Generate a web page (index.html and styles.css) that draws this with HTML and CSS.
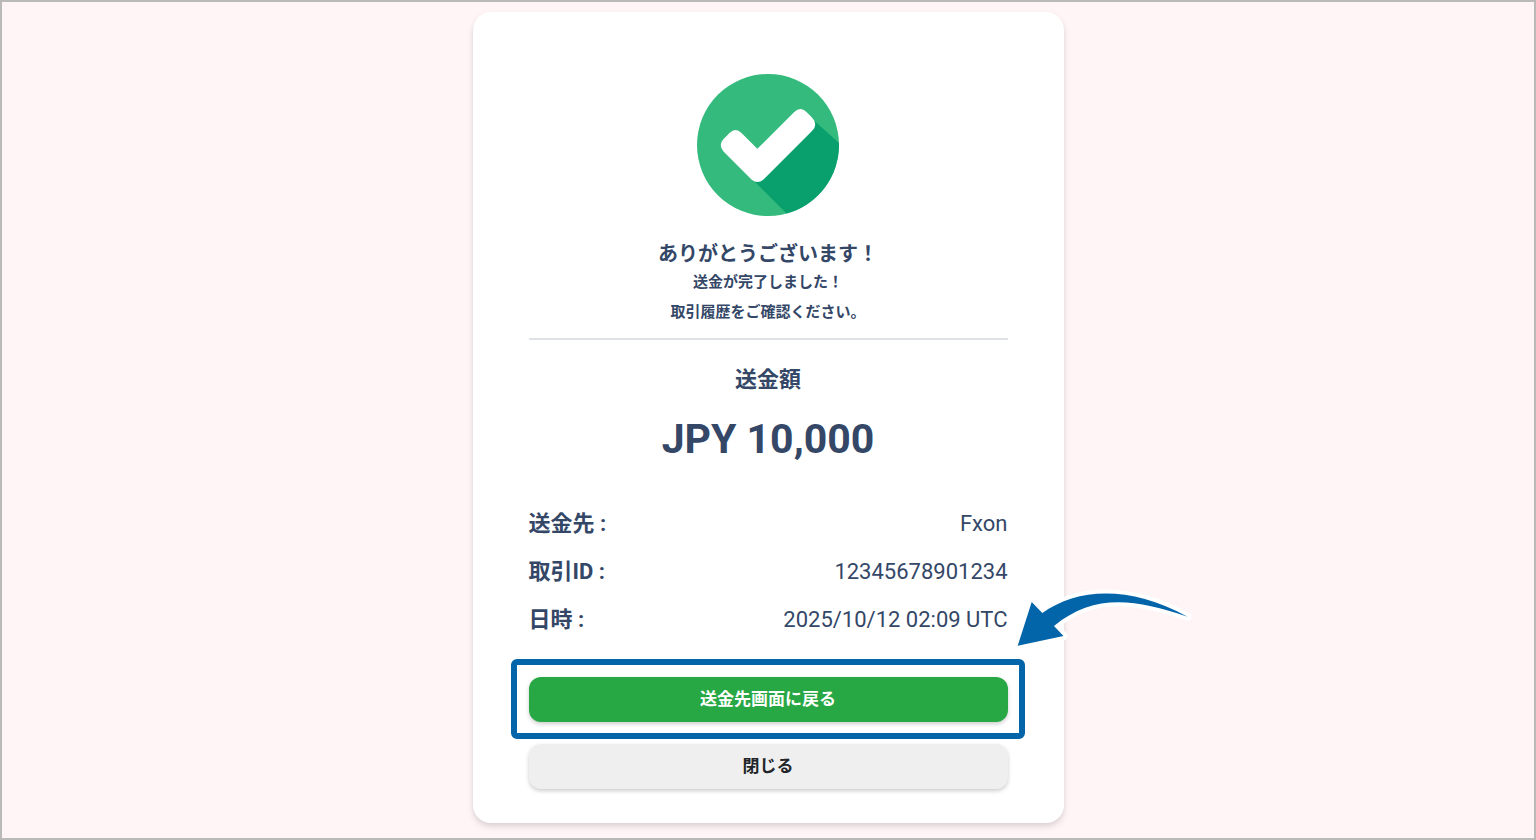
FILE: index.html
```html
<!DOCTYPE html>
<html lang="ja">
<head>
    <meta charset="UTF-8">
    <meta name="viewport" content="width=device-width, initial-scale=1.0">
    <title>送金完了</title>
    <link rel="stylesheet" href="styles.css">
</head>
<body>
    <main class="card">
        <svg class="success-icon" viewBox="0 0 142 142" aria-hidden="true">
            <circle cx="71" cy="71" r="71" fill="#33ba7c"/>
            <path fill="#0aa06e" d="M117 46.500L142 69A71 71 0 0 1 89.500 139.500L56 106Z"/>
            <path fill="#fff" d="M26.500 65L32.500 59Q38.500 53 44.500 59L60.300 74.800L97 38.300Q103.500 32 109.500 38L115 43.500Q121.500 50.500 115 57L66.500 105.500Q60.500 110.500 54.500 105.500L26.500 77.500Q21 71 26.500 65Z"/>
        </svg>

        <div class="message">
            <h1>ありがとうございます！</h1>
            <p>送金が完了しました！</p>
            <p>取引履歴をご確認ください。</p>
        </div>

        <div class="amount">
            <h2>送金額</h2>
            <div class="amount-value">JPY 10,000</div>
        </div>

        <dl class="details">
            <div class="detail-row">
                <dt>送金先 :</dt>
                <dd>Fxon</dd>
            </div>
            <div class="detail-row">
                <dt>取引ID :</dt>
                <dd>12345678901234</dd>
            </div>
            <div class="detail-row">
                <dt>日時 :</dt>
                <dd>2025/10/12 02:09 UTC</dd>
            </div>
        </dl>

        <div class="actions">
            <div class="highlight">
                <button type="button" class="btn btn-primary">送金先画面に戻る</button>
                <svg class="arrow" viewBox="0 0 185 70" aria-hidden="true">
                    <path d="M7.700 60.700L21.700 17L32.300 28C68 3 119 0 177.500 31.700C123 13 83 9 44 41L53.500 51Z"/>
                </svg>
            </div>
            <button type="button" class="btn btn-secondary">閉じる</button>
        </div>
    </main>
</body>
</html>
```

FILE: styles.css
```css
* {
    margin: 0;
    padding: 0;
    box-sizing: border-box;
}

body {
    min-height: 100vh;
    padding: 10px 16px 15px;
    border: 2px solid #b9bab7;
    background: #fff5f6;
    color: #344767;
    font-family: Roboto, 'Noto Sans CJK JP', sans-serif;
}

.card {
    max-width: 591px;
    margin: 0 auto;
    padding: 62px 56px 34px;
    background: #fff;
    border-radius: 18px;
    box-shadow: 0 4px 7px rgba(0, 0, 0, 0.1), 0 2px 4px rgba(0, 0, 0, 0.06);
}

.success-icon {
    display: block;
    width: 142px;
    height: 142px;
    margin: 0 auto;
}

.message {
    padding: 25px 0 11px;
    border-bottom: 2px solid #dee2e6;
    text-align: center;
}

.message h1 {
    font-size: 20px;
    line-height: 26px;
    font-weight: 700;
}

.message p {
    font-size: 15px;
    line-height: 30px;
    font-weight: 700;
}

.amount {
    padding-top: 23px;
    text-align: center;
}

.amount h2 {
    font-size: 22px;
    line-height: 34px;
    font-weight: 700;
}

.amount-value {
    margin-top: 16px;
    font-size: 41px;
    line-height: 52px;
    font-weight: 700;
}

.details {
    display: grid;
    gap: 14px;
    margin-top: 42px;
}

.detail-row {
    display: flex;
    justify-content: space-between;
    align-items: center;
    font-size: 22px;
    line-height: 34px;
}

.detail-row dt {
    font-weight: 700;
}

.actions {
    display: grid;
    gap: 22px;
    margin-top: 40px;
}

.btn {
    display: block;
    width: 100%;
    border: none;
    border-radius: 12px;
    font-family: inherit;
    font-size: 17px;
    line-height: 45px;
    font-weight: 700;
    cursor: pointer;
    box-shadow: 0 2px 4px rgba(0, 0, 0, 0.2);
}

.btn-primary {
    background: #28a745;
    color: #fff;
}

.btn-secondary {
    background: #efefef;
    color: #212529;
}

.highlight {
    position: relative;
}

/* frame around the main button */
.highlight::before {
    content: '';
    position: absolute;
    inset: -18px -17px -17px -18px;
    border: 6px solid #0365a9;
    border-radius: 6px;
    pointer-events: none;
}

.arrow {
    position: absolute;
    top: -92px;
    right: -187px;
    width: 185px;
    height: 70px;
    overflow: visible;
    pointer-events: none;
}

.arrow path {
    fill: #0365a9;
    stroke: #fff;
    stroke-width: 8px;
    stroke-linejoin: round;
    paint-order: stroke;
}
```
